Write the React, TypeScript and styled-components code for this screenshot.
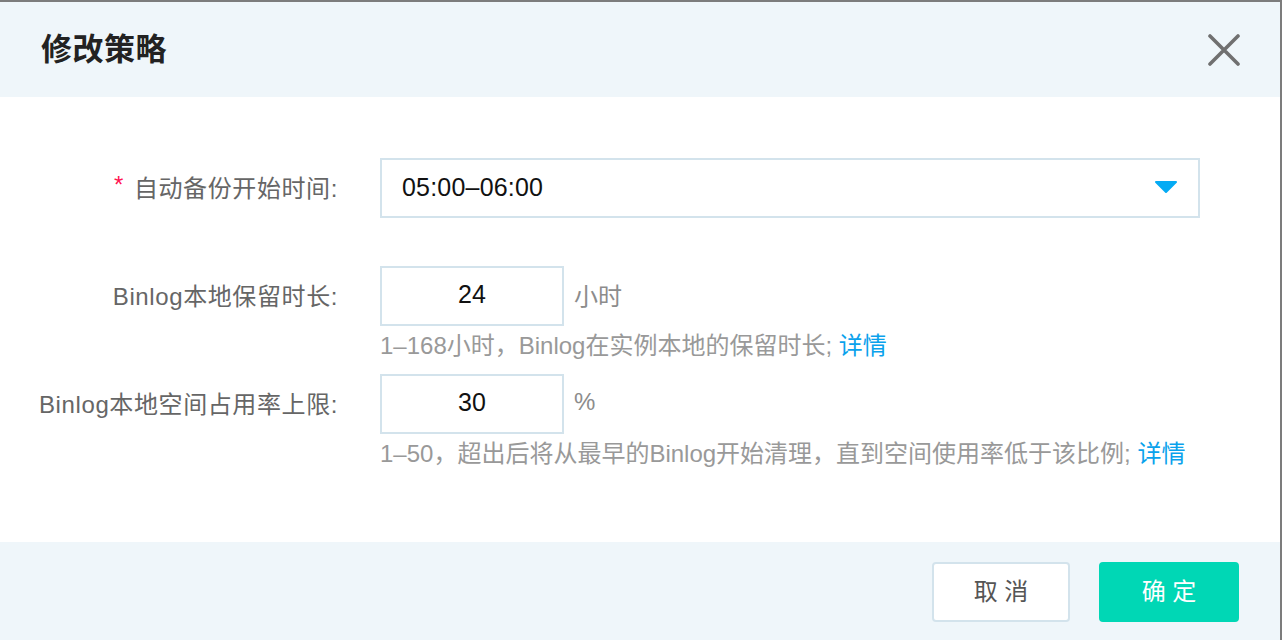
import * as React from 'react'
import styled, { createGlobalStyle } from 'styled-components'

const GlobalStyle = createGlobalStyle`
  html, body {
    margin: 0;
    padding: 0;
    height: 100%;
    background: #7c7c7c;
    overflow: hidden;
  }
  #root {
    height: 100%;
  }
  * {
    box-sizing: border-box;
  }
`

const FONT = `"Liberation Sans", "Noto Sans CJK SC", sans-serif`

const Page = styled.div`
  height: 100%;
  padding: 2px 2px 0 0;
  font-family: ${FONT};
`

const Modal = styled.div`
  display: flex;
  flex-direction: column;
  height: 100%;
  background: #fff;
`

const Header = styled.div`
  height: 95px;
  flex-shrink: 0;
  display: flex;
  align-items: center;
  justify-content: space-between;
  padding: 0 40px 0 41px;
  background: #eff6fa;
`

const Title = styled.h2`
  margin: 0 0 7px;
  font-size: 31px;
  font-weight: 700;
  color: #222;
  letter-spacing: 0.5px;
`

const CloseButton = styled.button`
  width: 32px;
  height: 32px;
  padding: 0;
  border: 0;
  background: transparent;
  display: flex;
  cursor: pointer;
`

const Body = styled.div`
  padding: 61px 0 60px;
  display: flex;
  flex-direction: column;
`

const Field = styled.div`
  display: grid;
  grid-template-columns: 338px 1fr;
  column-gap: 42px;
  margin-bottom: 10px;
`

const Label = styled.label`
  height: 60px;
  display: flex;
  align-items: center;
  justify-content: flex-end;
  padding-bottom: 4px;
  font-size: 24px;
  letter-spacing: 0.6px;
  color: #666;
  white-space: nowrap;
`

const Required = styled.span`
  color: #ff1552;
  margin-right: 10px;
  font-size: 24px;
  position: relative;
  top: -1px;
`

const Control = styled.div`
  display: flex;
  flex-direction: column;
`

const InputRow = styled.div`
  display: flex;
  align-items: center;
`

const Select = styled.div`
  width: 820px;
  height: 60px;
  border: 2px solid #d3e3ec;
  display: flex;
  align-items: center;
  justify-content: space-between;
  padding: 0 20px 2px 20px;
  font-size: 25px;
  letter-spacing: 0.2px;
  color: #111;
  cursor: pointer;
`

const NumberInput = styled.input`
  width: 184px;
  height: 60px;
  border: 2px solid #d3e3ec;
  text-align: center;
  font-family: ${FONT};
  font-size: 25px;
  color: #111;
  outline: none;
  padding: 0 0 3px;
`

const Unit = styled.span`
  margin: 0 0 4px 10px;
  font-size: 24px;
  color: #8c8c8c;
`

const Help = styled.div`
  height: 36px;
  margin-top: 2px;
  line-height: 36px;
  font-size: 24px;
  color: #999;
  white-space: nowrap;
`

const Link = styled.a`
  color: #0aa2ec;
  text-decoration: none;
`

const Footer = styled.div`
  flex: 1;
  display: flex;
  justify-content: flex-end;
  align-items: flex-start;
  gap: 29px;
  padding: 20px 41px 0 0;
  background: #eff6fa;
`

const Button = styled.button<{ $primary?: boolean }>`
  width: ${({ $primary }) => ($primary ? '140px' : '138px')};
  height: 60px;
  border-radius: 4px;
  border: 2px solid ${({ $primary }) => ($primary ? '#00d7b5' : '#d3e3ec')};
  background: ${({ $primary }) => ($primary ? '#00d7b5' : '#fff')};
  color: ${({ $primary }) => ($primary ? '#fff' : '#555')};
  font-family: ${FONT};
  font-size: 24px;
  padding: 0 0 5px;
  white-space: pre;
  cursor: pointer;
`

const Caret = () => (
  <svg width="24" height="14" viewBox="0 0 24 14">
    <path d="M2 2 L22 2 L12 12 Z" fill="#05abf4" stroke="#05abf4" strokeWidth="2" strokeLinejoin="round" />
  </svg>
)

const CloseIcon = () => (
  <svg width="32" height="32" viewBox="0 0 32 32">
    <path d="M2 2 L30 30 M30 2 L2 30" stroke="#707070" strokeWidth="3.6" strokeLinecap="round" />
  </svg>
)

export default function App() {
  return (
    <Page>
      <GlobalStyle />
      <Modal>
        <Header>
          <Title>修改策略</Title>
          <CloseButton aria-label="关闭">
            <CloseIcon />
          </CloseButton>
        </Header>
        <Body>
          <Field>
            <Label>
              <Required>*</Required>自动备份开始时间:
            </Label>
            <Control>
              <Select>
                <span>05:00–06:00</span>
                <Caret />
              </Select>
              <Help />
            </Control>
          </Field>
          <Field>
            <Label>Binlog本地保留时长:</Label>
            <Control>
              <InputRow>
                <NumberInput defaultValue="24" />
                <Unit>小时</Unit>
              </InputRow>
              <Help>
                1–168小时，Binlog在实例本地的保留时长; <Link href="#">详情</Link>
              </Help>
            </Control>
          </Field>
          <Field>
            <Label>Binlog本地空间占用率上限:</Label>
            <Control>
              <InputRow>
                <NumberInput defaultValue="30" />
                <Unit>%</Unit>
              </InputRow>
              <Help>
                1–50，超出后将从最早的Binlog开始清理，直到空间使用率低于该比例; <Link href="#">详情</Link>
              </Help>
            </Control>
          </Field>
        </Body>
        <Footer>
          <Button>取 消</Button>
          <Button $primary>确 定</Button>
        </Footer>
      </Modal>
    </Page>
  )
}
